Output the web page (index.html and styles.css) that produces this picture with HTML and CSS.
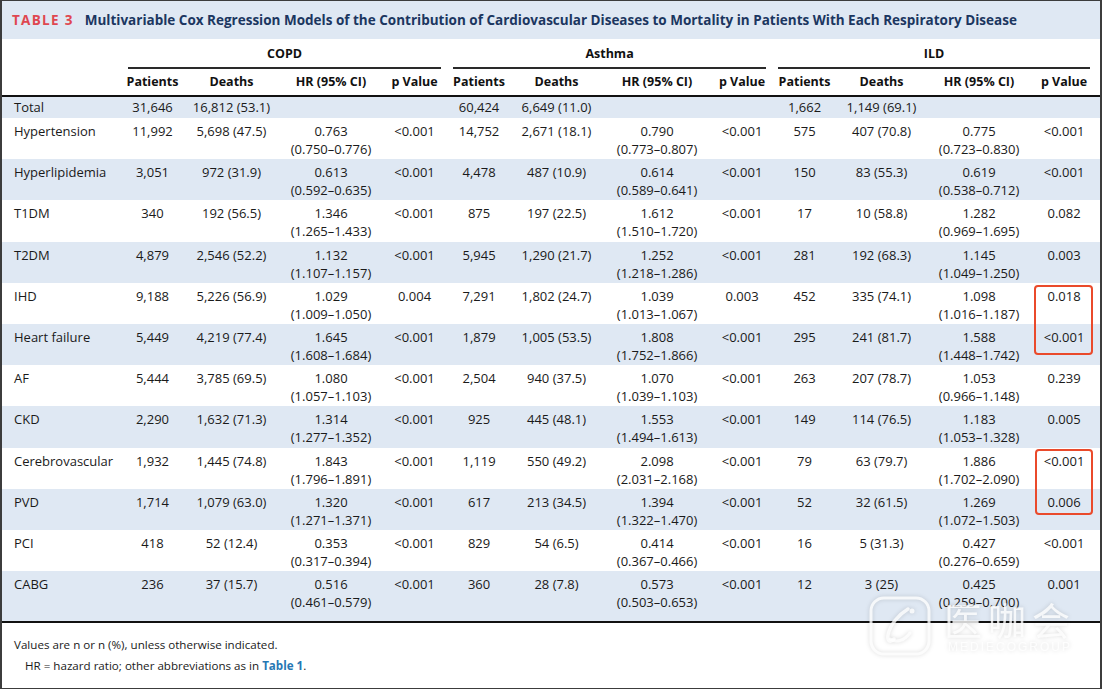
FILE: index.html
```html
<!DOCTYPE html>
<html lang="en">
<head>
<meta charset="utf-8">
<title>Table 3</title>
<link rel="stylesheet" href="styles.css">
</head>
<body>
<div class="page">
  <div class="title-bar">
    <span class="tag">TABLE 3</span>
    <span class="title">Multivariable Cox Regression Models of the Contribution of Cardiovascular Diseases to Mortality in Patients With Each Respiratory Disease</span>
  </div>
  <table class="data">
    <colgroup>
      <col class="c-label">
      <col class="c-pat1"><col class="c-dth1"><col class="c-hr1"><col class="c-p1">
      <col class="c-pat2"><col class="c-dth2"><col class="c-hr2"><col class="c-p2">
      <col class="c-pat3"><col class="c-dth3"><col class="c-hr3"><col class="c-p3">
      <col class="c-end">
    </colgroup>
    <thead>
      <tr class="group-row">
        <th></th>
        <th colspan="4"><div class="grp">COPD</div></th>
        <th colspan="4"><div class="grp">Asthma</div></th>
        <th colspan="4"><div class="grp">ILD</div></th>
        <th></th>
      </tr>
      <tr class="head-row">
        <th></th>
        <th>Patients</th><th>Deaths</th><th>HR (95% CI)</th><th>p Value</th>
        <th>Patients</th><th>Deaths</th><th>HR (95% CI)</th><th>p Value</th>
        <th>Patients</th><th>Deaths</th><th>HR (95% CI)</th><th>p Value</th>
        <th></th>
      </tr>
    </thead>
    <tbody>
      <tr class="total shade">
        <td class="label">Total</td>
        <td>31,646</td><td>16,812 (53.1)</td><td></td><td></td>
        <td>60,424</td><td>6,649 (11.0)</td><td></td><td></td>
        <td>1,662</td><td>1,149 (69.1)</td><td></td><td></td><td></td>
      </tr>
      <tr>
        <td class="label">Hypertension</td>
        <td>11,992</td><td>5,698 (47.5)</td><td>0.763<br>(0.750–0.776)</td><td>&lt;0.001</td>
        <td>14,752</td><td>2,671 (18.1)</td><td>0.790<br>(0.773–0.807)</td><td>&lt;0.001</td>
        <td>575</td><td>407 (70.8)</td><td>0.775<br>(0.723–0.830)</td><td>&lt;0.001</td><td></td>
      </tr>
      <tr class="shade">
        <td class="label">Hyperlipidemia</td>
        <td>3,051</td><td>972 (31.9)</td><td>0.613<br>(0.592–0.635)</td><td>&lt;0.001</td>
        <td>4,478</td><td>487 (10.9)</td><td>0.614<br>(0.589–0.641)</td><td>&lt;0.001</td>
        <td>150</td><td>83 (55.3)</td><td>0.619<br>(0.538–0.712)</td><td>&lt;0.001</td><td></td>
      </tr>
      <tr>
        <td class="label">T1DM</td>
        <td>340</td><td>192 (56.5)</td><td>1.346<br>(1.265–1.433)</td><td>&lt;0.001</td>
        <td>875</td><td>197 (22.5)</td><td>1.612<br>(1.510–1.720)</td><td>&lt;0.001</td>
        <td>17</td><td>10 (58.8)</td><td>1.282<br>(0.969–1.695)</td><td>0.082</td><td></td>
      </tr>
      <tr class="shade">
        <td class="label">T2DM</td>
        <td>4,879</td><td>2,546 (52.2)</td><td>1.132<br>(1.107–1.157)</td><td>&lt;0.001</td>
        <td>5,945</td><td>1,290 (21.7)</td><td>1.252<br>(1.218–1.286)</td><td>&lt;0.001</td>
        <td>281</td><td>192 (68.3)</td><td>1.145<br>(1.049–1.250)</td><td>0.003</td><td></td>
      </tr>
      <tr>
        <td class="label">IHD</td>
        <td>9,188</td><td>5,226 (56.9)</td><td>1.029<br>(1.009–1.050)</td><td>0.004</td>
        <td>7,291</td><td>1,802 (24.7)</td><td>1.039<br>(1.013–1.067)</td><td>0.003</td>
        <td>452</td><td>335 (74.1)</td><td>1.098<br>(1.016–1.187)</td><td>0.018</td><td></td>
      </tr>
      <tr class="shade">
        <td class="label">Heart failure</td>
        <td>5,449</td><td>4,219 (77.4)</td><td>1.645<br>(1.608–1.684)</td><td>&lt;0.001</td>
        <td>1,879</td><td>1,005 (53.5)</td><td>1.808<br>(1.752–1.866)</td><td>&lt;0.001</td>
        <td>295</td><td>241 (81.7)</td><td>1.588<br>(1.448–1.742)</td><td>&lt;0.001</td><td></td>
      </tr>
      <tr>
        <td class="label">AF</td>
        <td>5,444</td><td>3,785 (69.5)</td><td>1.080<br>(1.057–1.103)</td><td>&lt;0.001</td>
        <td>2,504</td><td>940 (37.5)</td><td>1.070<br>(1.039–1.103)</td><td>&lt;0.001</td>
        <td>263</td><td>207 (78.7)</td><td>1.053<br>(0.966–1.148)</td><td>0.239</td><td></td>
      </tr>
      <tr class="shade">
        <td class="label">CKD</td>
        <td>2,290</td><td>1,632 (71.3)</td><td>1.314<br>(1.277–1.352)</td><td>&lt;0.001</td>
        <td>925</td><td>445 (48.1)</td><td>1.553<br>(1.494–1.613)</td><td>&lt;0.001</td>
        <td>149</td><td>114 (76.5)</td><td>1.183<br>(1.053–1.328)</td><td>0.005</td><td></td>
      </tr>
      <tr>
        <td class="label">Cerebrovascular</td>
        <td>1,932</td><td>1,445 (74.8)</td><td>1.843<br>(1.796–1.891)</td><td>&lt;0.001</td>
        <td>1,119</td><td>550 (49.2)</td><td>2.098<br>(2.031–2.168)</td><td>&lt;0.001</td>
        <td>79</td><td>63 (79.7)</td><td>1.886<br>(1.702–2.090)</td><td>&lt;0.001</td><td></td>
      </tr>
      <tr class="shade">
        <td class="label">PVD</td>
        <td>1,714</td><td>1,079 (63.0)</td><td>1.320<br>(1.271–1.371)</td><td>&lt;0.001</td>
        <td>617</td><td>213 (34.5)</td><td>1.394<br>(1.322–1.470)</td><td>&lt;0.001</td>
        <td>52</td><td>32 (61.5)</td><td>1.269<br>(1.072–1.503)</td><td>0.006</td><td></td>
      </tr>
      <tr>
        <td class="label">PCI</td>
        <td>418</td><td>52 (12.4)</td><td>0.353<br>(0.317–0.394)</td><td>&lt;0.001</td>
        <td>829</td><td>54 (6.5)</td><td>0.414<br>(0.367–0.466)</td><td>&lt;0.001</td>
        <td>16</td><td>5 (31.3)</td><td>0.427<br>(0.276–0.659)</td><td>&lt;0.001</td><td></td>
      </tr>
      <tr class="shade last">
        <td class="label">CABG</td>
        <td>236</td><td>37 (15.7)</td><td>0.516<br>(0.461–0.579)</td><td>&lt;0.001</td>
        <td>360</td><td>28 (7.8)</td><td>0.573<br>(0.503–0.653)</td><td>&lt;0.001</td>
        <td>12</td><td>3 (25)</td><td>0.425<br>(0.259–0.700)</td><td>0.001</td><td></td>
      </tr>
    </tbody>
  </table>
  <div class="notes">
    <p class="note">Values are n or n (%), unless otherwise indicated.</p>
    <p class="note indent">HR = hazard ratio; other abbreviations as in <span class="ref">Table 1</span>.</p>
  </div>

  <div class="mark mark-a"></div>
  <div class="mark mark-b"></div>

  <div class="watermark">
    <svg class="wm-logo" width="64" height="62" viewBox="0 0 64 62">
      <rect x="3" y="3" width="58" height="56" rx="13" fill="none" stroke="currentColor" stroke-width="3"/>
      <path d="M40 14 C30 20 22 30 20 40 C19 46 22 48 26 44" fill="none" stroke="currentColor" stroke-width="3.5" stroke-linecap="round"/>
      <path d="M22 44 C28 48 36 46 42 38" fill="none" stroke="currentColor" stroke-width="3" stroke-linecap="round"/>
      <circle cx="44" cy="16" r="2.5" fill="currentColor"/>
    </svg>
    <div class="wm-text">
      <span class="wm-cn">医咖会</span>
      <span class="wm-en">MEDIECOGROUP</span>
    </div>
  </div>
</div>
</body>
</html>
```

FILE: styles.css
```css
* { box-sizing: border-box; }

body {
  margin: 0;
  background: #ffffff;
  font-family: "Open Sans", "Noto Sans", "Liberation Sans", sans-serif;
  color: #1a1a1a;
}

.page {
  position: relative;
  width: 1102px;
  height: 689px;
  border: 1px solid #3c3c3c;
  border-left-width: 2px;
  border-right-width: 2px;
  overflow: hidden;
}

.title-bar {
  height: 38px;
  background: #dfe8f3;
  display: flex;
  align-items: center;
  gap: 11px;
  padding-left: 10px;
  font-weight: 700;
  font-size: 13.5px;
  white-space: nowrap;
}

.tag {
  color: #df4750;
  letter-spacing: 1.3px;
}

.title {
  color: #1b3660;
}

.data {
  width: 100%;
  border-collapse: collapse;
  table-layout: fixed;
  font-size: 13px;
  line-height: 18px;
}

.c-label { width: 120px; }
.c-pat1 { width: 61px; }
.c-dth1 { width: 97px; }
.c-hr1 { width: 102px; }
.c-p1 { width: 65px; }
.c-pat2 { width: 64px; }
.c-dth2 { width: 91px; }
.c-hr2 { width: 110px; }
.c-p2 { width: 60px; }
.c-pat3 { width: 65px; }
.c-dth3 { width: 89px; }
.c-hr3 { width: 106px; }
.c-p3 { width: 64px; }

th {
  font-weight: 700;
  font-size: 12.5px;
  text-align: center;
  padding: 0;
  color: #111;
}

.group-row th {
  padding-top: 6px;
}

.grp {
  margin: 0 6px;
  padding-bottom: 4px;
  border-bottom: 2px solid #2a2a2a;
}

.head-row th {
  padding: 4px 0 4px;
  border-bottom: 2px solid #111;
}

td {
  text-align: center;
  vertical-align: top;
  padding: 4px 0 1.2px;
  white-space: nowrap;
}

td.label {
  text-align: left;
  padding-left: 12px;
}

tr.total td {
  padding: 1px 0 2px;
}

tr.total td.label {
  padding-left: 12px;
}

tr.shade td {
  background: #dfe8f3;
}

tr.last td {
  padding-bottom: 10px;
  border-bottom: 2px solid #111;
}

.notes {
  padding: 11px 0 0 12px;
  font-size: 11.6px;
  line-height: 21px;
}

.note {
  margin: 0;
}

.note.indent {
  padding-left: 11px;
}

.ref {
  color: #2677b4;
  font-weight: 700;
}

.mark {
  position: absolute;
  border: 2px solid #ea4a2b;
  border-radius: 4px;
}

.mark-a {
  left: 1032px;
  top: 284px;
  width: 59px;
  height: 70px;
}

.mark-b {
  left: 1033px;
  top: 448px;
  width: 58px;
  height: 66px;
}

.watermark {
  position: absolute;
  left: 866px;
  top: 594px;
  display: flex;
  align-items: center;
  gap: 12px;
  color: rgba(255, 255, 255, 0.8);
  filter: drop-shadow(0 0 2px rgba(0, 0, 0, 0.18));
  pointer-events: none;
}

.wm-text {
  display: flex;
  flex-direction: column;
  align-items: center;
}

.wm-cn {
  font-family: "Noto Sans CJK SC", sans-serif;
  font-size: 38px;
  line-height: 42px;
  letter-spacing: 6px;
  font-weight: 400;
}

.wm-en {
  font-family: "Liberation Sans", sans-serif;
  font-size: 12px;
  line-height: 14px;
  letter-spacing: 2px;
}
```
